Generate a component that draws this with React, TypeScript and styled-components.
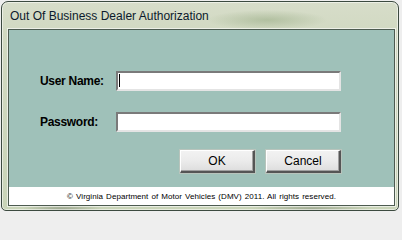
import React from "react";
import styled, { createGlobalStyle } from "styled-components";

const Global = createGlobalStyle`
  html, body { margin: 0; padding: 0; background: #eeeeee; }
  #root { width: 402px; height: 214px; }
`;

const Window = styled.div`
  box-sizing: border-box;
  margin: 1px 0 0 1px;
  width: 398px;
  height: 210px;
  border: 1px solid #3c4a40;
  border-radius: 7px 7px 5px 5px;
  background:
    radial-gradient(ellipse 60px 10px at 265px 18px, rgba(150,170,130,0.55), transparent),
    radial-gradient(ellipse 40px 8px at 60px 208px, rgba(120,130,110,0.6), transparent),
    radial-gradient(ellipse 60px 6px at 310px 207px, rgba(120,130,110,0.5), transparent),
    linear-gradient(180deg, #d7ddca 0%, #d1d9c1 15%, #c9d4b8 100%);
  box-shadow: inset 0 0 0 1px rgba(255,255,255,0.55);
  display: flex;
  flex-direction: column;
  padding: 0 3px 4px 6px;
  font-family: "Liberation Sans", Arial, sans-serif;
`;

const TitleBar = styled.div`
  height: 27px;
  display: flex;
  align-items: center;
  padding: 0 0 0 2px;
  font-family: "Liberation Sans", Arial, sans-serif;
  font-size: 12px;
  color: #0c1a2c;
`;

const Client = styled.div`
  flex: 1;
  display: flex;
  flex-direction: column;
  border: 1px solid #4d5b50;
  box-shadow: 0 0 0 1px rgba(255,255,255,0.6);
`;

const FormArea = styled.div`
  flex: 1;
  background: #9fc1b9;
  padding: 41px 0 0 31px;
  display: flex;
  flex-direction: column;
`;

const Row = styled.div<{ $gap: number }>`
  display: grid;
  grid-template-columns: 76px 225px;
  align-items: center;
  height: 20px;
  margin-bottom: ${(p) => p.$gap}px;
`;

const Label = styled.label`
  font-family: "Liberation Sans", Arial, sans-serif;
  font-weight: bold;
  font-size: 12px;
  color: #000;
  letter-spacing: -0.3px;
`;

const Input = styled.div`
  box-sizing: border-box;
  height: 20px;
  background: #fff;
  border-top: 2px solid #7a7a7a;
  border-left: 2px solid #7a7a7a;
  border-right: 2px solid #e4e4e4;
  border-bottom: 2px solid #e4e4e4;
  position: relative;
`;

const Caret = styled.span`
  position: absolute;
  left: 1px;
  top: 1px;
  width: 1px;
  height: 13px;
  background: #000;
`;

const Buttons = styled.div`
  display: flex;
  gap: 11px;
  padding-left: 140px;
`;

const Button = styled.button`
  box-sizing: border-box;
  width: 75px;
  height: 23px;
  padding: 0;
  font-family: "Liberation Sans", Arial, sans-serif;
  font-size: 12px;
  color: #000;
  background: linear-gradient(180deg, #f2f2f2 0%, #ebebeb 50%, #dddddd 100%);
  border-top: 1px solid #ffffff;
  border-left: 1px solid #ffffff;
  border-right: 2px solid #555;
  border-bottom: 2px solid #555;
  box-shadow: inset -1px -1px 0 #a0a0a0, 0 0 0 1px #b8c4bc;
`;

const Footer = styled.div`
  height: 18px;
  background: #fff;
  display: flex;
  align-items: center;
  justify-content: center;
  font-family: "Liberation Sans", Arial, sans-serif;
  font-size: 8px;
  letter-spacing: 0.05px;
  word-spacing: 0.8px;
  color: #000;
`;

export default function App() {
  return (
    <>
      <Global />
      <Window>
        <TitleBar>Out Of Business Dealer Authorization</TitleBar>
        <Client>
          <FormArea>
            <Row $gap={21}>
              <Label>User Name:</Label>
              <Input>
                <Caret />
              </Input>
            </Row>
            <Row $gap={18}>
              <Label>Password:</Label>
              <Input />
            </Row>
            <Buttons>
              <Button>OK</Button>
              <Button>Cancel</Button>
            </Buttons>
          </FormArea>
          <Footer>© Virginia Department of Motor Vehicles (DMV) 2011. All rights reserved.</Footer>
        </Client>
      </Window>
    </>
  );
}
